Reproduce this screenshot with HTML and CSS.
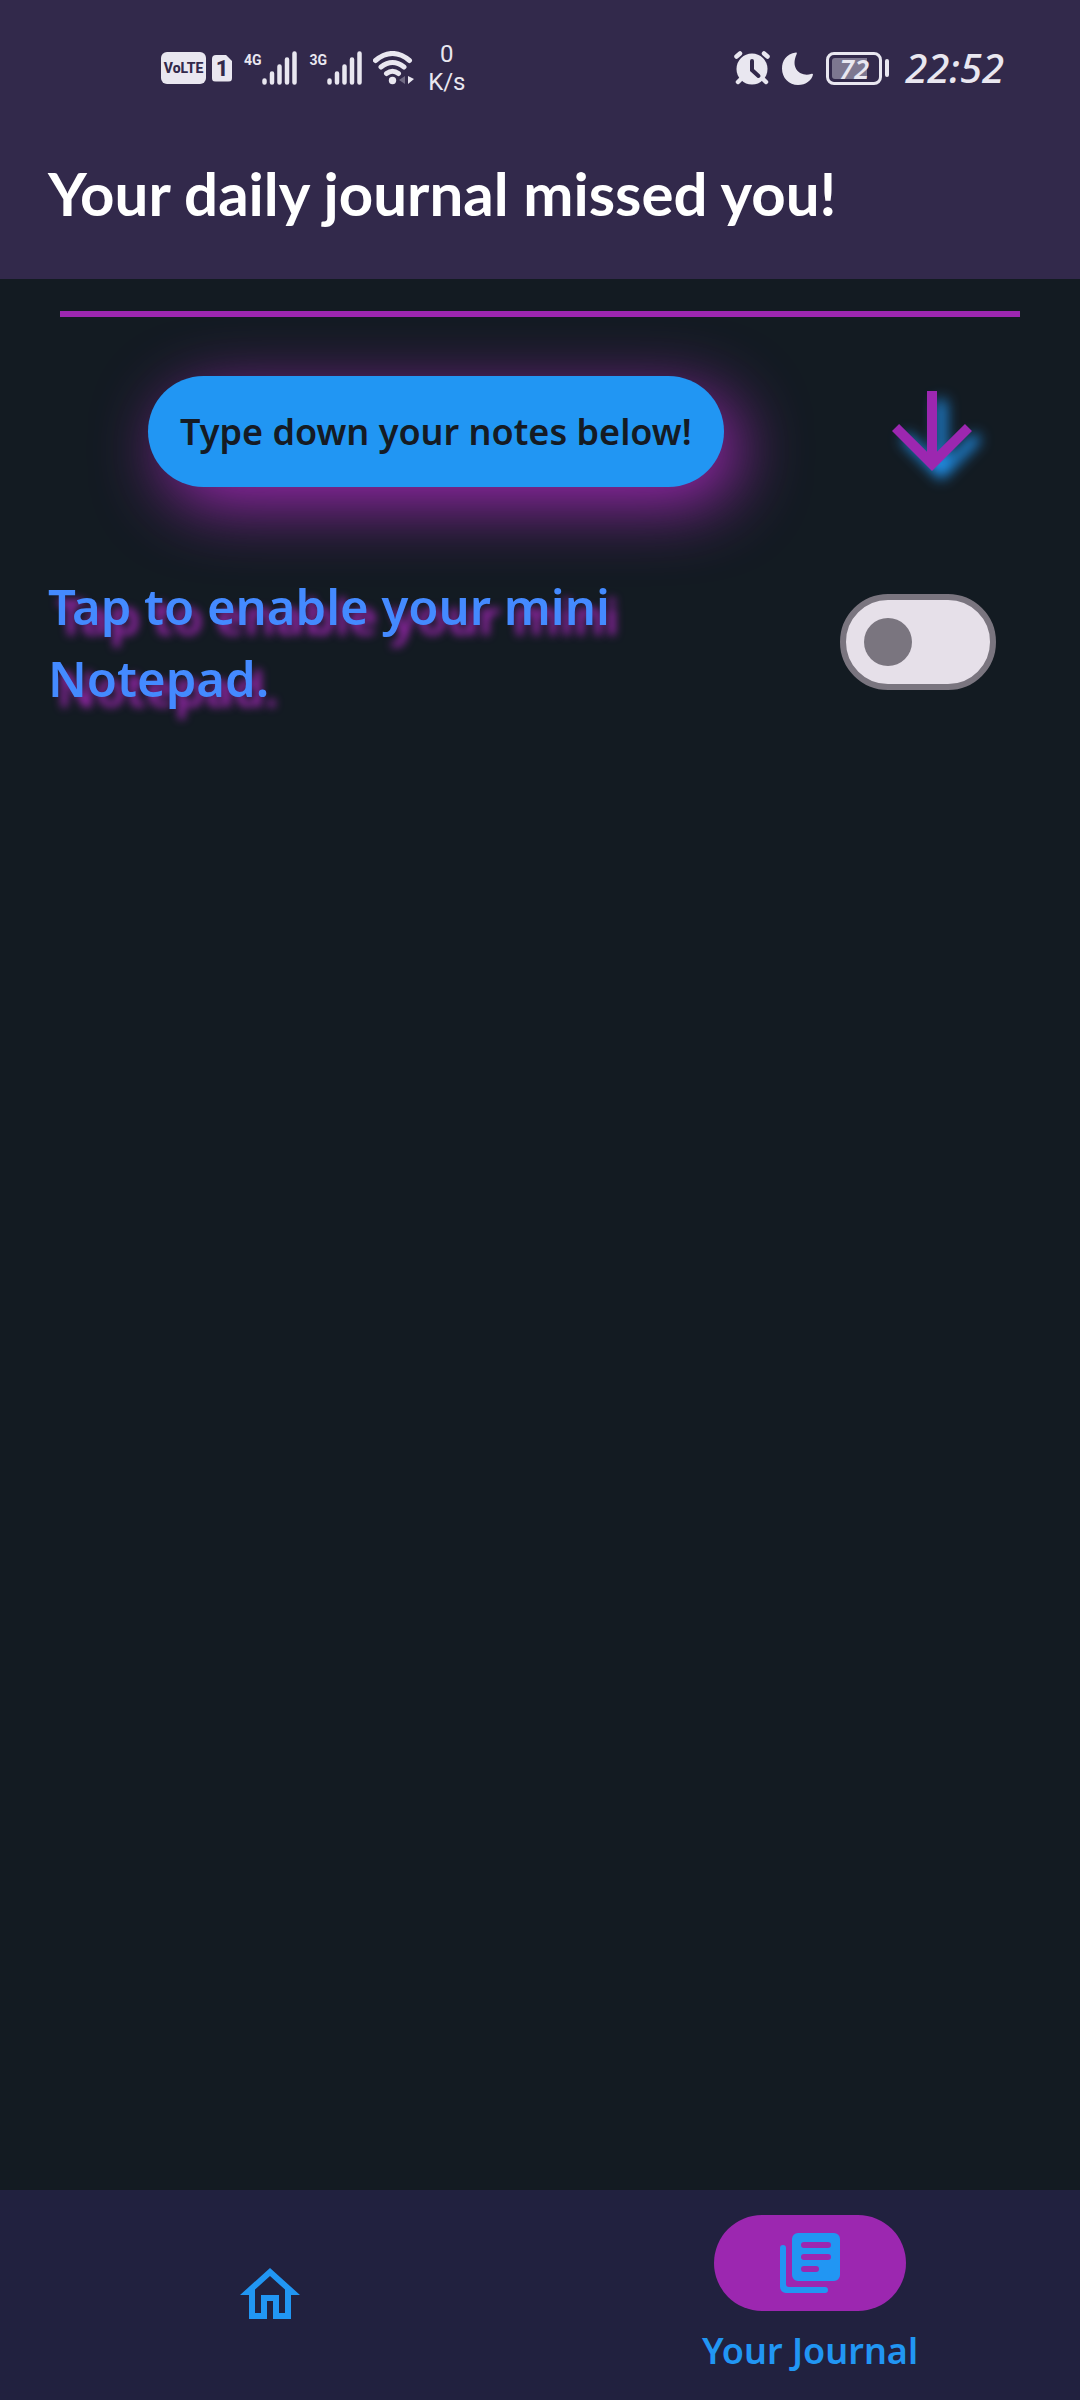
FILE: index.html
```html
<!DOCTYPE html>
<html lang="en">
<head>
<meta charset="utf-8">
<meta name="viewport" content="width=device-width, initial-scale=1">
<title>Your Journal</title>
<link rel="stylesheet" href="styles.css">
</head>
<body>
<header class="top">
  <div class="status">
    <div class="status-group">
      <span class="volte">VoLTE</span>
      <span class="sim">1</span>
      <span class="signal">
        <span class="net">4G</span>
        <svg width="36" height="34" viewBox="0 0 36 34" aria-hidden="true"><path d="M2.500 29.500v2M10 22.500v9M17.500 15.500v16M25 8.500v23M32.500 2.500v29"/></svg>
      </span>
      <span class="signal">
        <span class="net">3G</span>
        <svg width="36" height="34" viewBox="0 0 36 34" aria-hidden="true"><path d="M2.500 29.500v2M10 22.500v9M17.500 15.500v16M25 8.500v23M32.500 2.500v29"/></svg>
      </span>
      <svg class="wifi" width="42" height="34" viewBox="0 0 42 34" aria-hidden="true">
        <path class="arc" d="M2.500 9.500Q19.500-4.500 36.500 9.500M8 16Q19.500 7 31 16M13.500 22.500Q19.500 18 25.500 22.500"/>
        <circle cx="19.500" cy="29.500" r="3.700"/>
        <path class="dim" d="M32 25v8l-6-4z"/>
        <path d="M35 25v8l6-5z"/>
      </svg>
      <span class="speed">0<br>K/s</span>
    </div>
    <div class="status-group status-right">
      <svg width="36" height="34" viewBox="0 0 36 34" aria-hidden="true">
        <circle cx="18" cy="18" r="15.500"/>
        <path class="stroke" d="M2.500 5.500L6 2.500M33.500 5.500L30 2.500M6 29l-2 2M30 29l2 2"/>
        <path class="cut" d="M18 10v9l6.500 6"/>
      </svg>
      <svg width="32" height="33" viewBox="0 0 32 33" aria-hidden="true"><path d="M14 0.500C4 2 0 9 0 16.500C0 26 7 33 16 33C24 33 30 28 31 22.500C31 21.500 30 21.500 29 22C19 25 8 17 14.500 2.500Q15.500 0 14 0.500Z"/></svg>
      <span class="battery"><span class="battery-body"><span class="battery-text">72</span></span></span>
      <time class="clock">22:52</time>
    </div>
  </div>
  <h1 class="title">Your daily journal missed you!</h1>
</header>
<main class="content">
  <hr class="rule">
  <div class="hint">
    <p class="pill">Type down your notes below!</p>
    <svg class="arrow" viewBox="0 0 24 24" aria-hidden="true"><path d="M20 12l-1.410-1.410L13 16.170V4h-2v12.170l-5.580-5.590L4 12l8 8 8-8z"/></svg>
  </div>
  <div class="toggle">
    <label class="toggle-label" for="notepad">Tap to enable your mini Notepad.</label>
    <input class="switch" type="checkbox" role="switch" id="notepad">
  </div>
</main>
<nav class="tabs">
  <a class="tab" href="#home" aria-label="Home">
    <svg class="tab-icon" viewBox="0 0 24 24" aria-hidden="true"><path d="M12 5.690l5 4.500V18h-2v-6H9v6H7v-7.810l5-4.500M12 3L2 12h3v8h6v-6h2v6h6v-8h3L12 3z"/></svg>
  </a>
  <a class="tab" href="#journal" aria-current="page">
    <span class="indicator">
      <svg class="tab-icon" viewBox="0 0 24 24" aria-hidden="true"><path fill-rule="evenodd" d="M8 2h12a2 2 0 0 1 2 2v12a2 2 0 0 1-2 2H8a2 2 0 0 1-2-2V4a2 2 0 0 1 2-2zM10 5a1 1 0 0 0 0 2h8a1 1 0 0 0 0-2zM10 9a1 1 0 0 0 0 2h8a1 1 0 0 0 0-2zM10 13a1 1 0 0 0 0 2h4a1 1 0 0 0 0-2zM3 6a1 1 0 0 1 1 1v12a1 1 0 0 0 1 1h12a1 1 0 0 1 0 2H4a2 2 0 0 1-2-2V7a1 1 0 0 1 1-1z"/></svg>
    </span>
    <span class="tab-label">Your Journal</span>
  </a>
</nav>
</body>
</html>
```
FILE: styles.css
```css
:root {
  --page: #131b22;
  --bar: #32294b;
  --nav: #21213f;
  --purple: #9c27b0;
  --blue: #2196f3;
  --status: #e9e7f0;
}

* { box-sizing: border-box; }

body {
  margin: 0;
  min-height: 100vh;
  display: flex;
  flex-direction: column;
  background: var(--page);
  font-family: "Noto Sans", "Open Sans", sans-serif;
  font-weight: 600;
}

.top { background: var(--bar); padding-bottom: 48px; }

.status {
  display: flex;
  justify-content: space-between;
  align-items: center;
  height: 136px;
  padding: 0 76px 0 161px;
  color: var(--status);
}
.status svg { fill: currentColor; flex: none; }
.status-group { display: flex; align-items: center; gap: 10px; }
.status-right { gap: 12px; }

.volte, .sim {
  display: flex;
  align-items: center;
  justify-content: center;
  background: var(--status);
  color: var(--bar);
  font-family: Roboto, sans-serif;
  font-weight: 800;
}
.volte { width: 45px; height: 32px; border-radius: 6px; font-size: 14px; }
.sim {
  width: 20px;
  height: 27px;
  margin-left: -4px;
  border-radius: 4px;
  font-size: 22px;
  clip-path: polygon(0 0, 68% 0, 100% 24%, 100% 100%, 0 100%);
}

.signal { display: flex; align-items: flex-start; margin-left: 2px; }
.net { font: 700 14px/18px Roboto, sans-serif; }
.signal path { fill: none; stroke: currentColor; stroke-width: 4.500; stroke-linecap: round; }
.wifi .arc { fill: none; stroke: currentColor; stroke-width: 5; stroke-linecap: round; }
.wifi .dim { opacity: 0.35; }
.speed { margin-left: 3px; font: 400 24px/28px Roboto, sans-serif; text-align: center; }

.stroke, .cut { fill: none; stroke: currentColor; stroke-width: 4.500; stroke-linecap: round; }
.cut { stroke: var(--bar); stroke-width: 4; }

.battery { display: flex; align-items: center; gap: 3px; }
.battery::after { content: ""; width: 4px; height: 18px; border-radius: 2px; background: var(--status); }
.battery-body { width: 56px; height: 33px; padding: 3px; border: 3px solid var(--status); border-radius: 8px; }
.battery-text {
  display: block;
  border-radius: 3px;
  background: linear-gradient(to right, #7d7790 80%, transparent 80%);
  font: italic 600 27px/21px "Noto Sans", sans-serif;
  text-align: center;
}
.clock { margin-left: 4px; font-size: 40px; font-style: italic; font-weight: 500; line-height: 40px; }

.title {
  margin: 0;
  padding: 20px 48px 0;
  color: #fff;
  font: 700 60px/75px Lato, sans-serif;
}

.content { flex: 1; }
.rule { height: 6px; margin: 32px 60px 54px; border: 0; background: var(--purple); }

.hint {
  display: flex;
  align-items: center;
  justify-content: space-between;
  padding: 0 88px 0 148px;
}
.pill {
  margin: 0;
  padding: 30px 32px;
  border-radius: 60px;
  background: var(--blue);
  box-shadow: 15px 18px 68px var(--purple);
  color: #151b24;
  font-size: 36px;
  line-height: 51px;
}
.arrow {
  width: 120px;
  height: 120px;
  fill: var(--purple);
  filter: drop-shadow(9px 9px 7px var(--blue));
}

.toggle {
  display: flex;
  align-items: center;
  justify-content: space-between;
  gap: 48px;
  padding: 79px 84px 0 48px;
}
.toggle-label {
  max-width: 640px;
  color: #448aff;
  font-size: 49px;
  line-height: 72px;
  text-shadow: 9px 10px 9px var(--purple);
}
.switch {
  appearance: none;
  display: flex;
  align-items: center;
  flex: none;
  width: 156px;
  height: 96px;
  margin: 0;
  padding: 0 18px;
  border: 6px solid #7a757f;
  border-radius: 48px;
  background: #e6e0e9;
}
.switch::before { content: ""; width: 48px; height: 48px; border-radius: 50%; background: #7a757f; }
.switch:checked { justify-content: flex-end; background: var(--purple); }

.tabs { display: flex; height: 210px; background: var(--nav); color: var(--blue); }
.tab {
  flex: 1;
  display: flex;
  flex-direction: column;
  align-items: center;
  justify-content: center;
  gap: 16px;
  color: inherit;
  text-decoration: none;
}
.tab-icon { width: 72px; height: 72px; fill: currentColor; }
.indicator {
  display: flex;
  align-items: center;
  justify-content: center;
  width: 192px;
  height: 96px;
  border-radius: 48px;
  background: var(--purple);
}
.tab-label { font-size: 36px; line-height: 48px; }
```
